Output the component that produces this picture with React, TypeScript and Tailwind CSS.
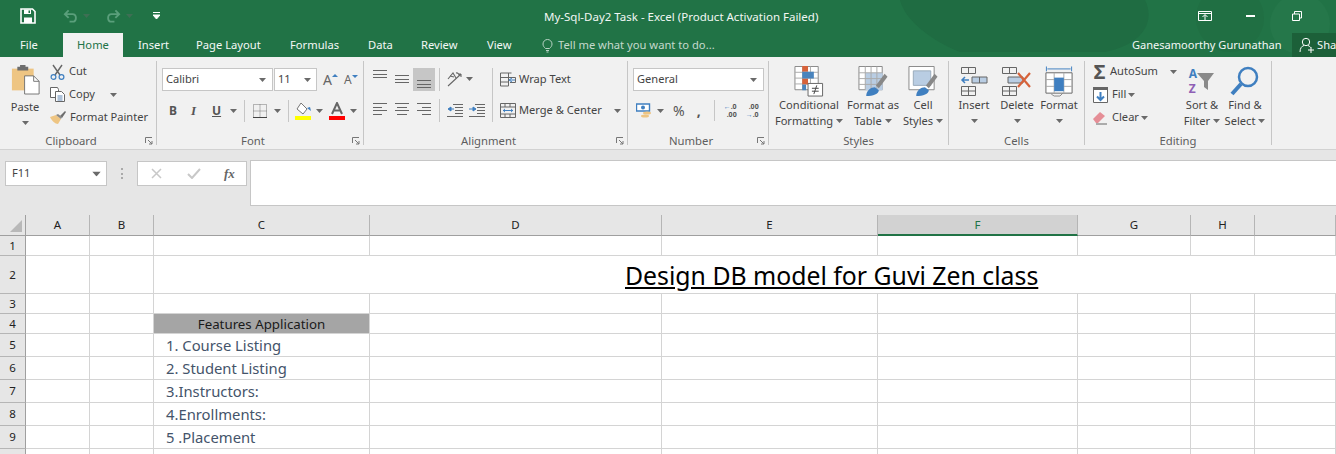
import type { ReactNode } from "react";

const FONT = "font-['Noto_Sans','Open_Sans',sans-serif]";

function Caret({ className = "" }: { className?: string }) {
  return (
    <svg width="7" height="4" viewBox="0 0 7 4" className={`shrink-0 ${className}`}>
      <path d="M0 0h7L3.5 4z" fill="#6a6a6a" />
    </svg>
  );
}

function Launcher() {
  return (
    <svg width="8" height="8" viewBox="0 0 8 8" className="absolute bottom-0 right-[3px]">
      <path d="M.5 6V.5H7M3 3l4 4M7 4v3H4" fill="none" stroke="#777" />
    </svg>
  );
}

function Sep({ className = "h-[22px] mx-[5px]" }: { className?: string }) {
  return <div className={`w-px shrink-0 bg-[#c6c6c6] ${className}`} />;
}

function Group({ label, width, launcher, children }: { label: string; width: string; launcher?: boolean; children: ReactNode }) {
  return (
    <div className={`relative flex h-[84px] shrink-0 flex-col border-r border-[#c6c6c6] ${width}`}>
      <div className="h-[73px] shrink-0">{children}</div>
      <div className={`h-[14px] shrink-0 text-center text-[11.3px] leading-[14px] text-[#5e5e5e] ${launcher ? "pr-[14px]" : ""}`}>{label}</div>
      {launcher && <Launcher />}
    </div>
  );
}

function Lines({ rows }: { rows: number[][] }) {
  return (
    <svg width="16" height={rows.length * 4} viewBox={`0 0 16 ${rows.length * 4}`} className="shrink-0">
      {rows.map(([x1, x2], i) => (
        <path key={i} d={`M${x1} ${Math.round(i * 3.6) + 0.5}H${x2}`} stroke="#666" />
      ))}
    </svg>
  );
}

function BigButton({ icon, lines, width, caretOnly }: { icon: ReactNode; lines: string[]; width: string; caretOnly?: boolean }) {
  return (
    <div className={`flex shrink-0 flex-col items-center ${width}`}>
      <div className="flex h-[31px] items-start justify-center">{icon}</div>
      <div className="whitespace-nowrap text-center text-[11.1px] leading-[16px] text-[#444]">{lines[0]}</div>
      {caretOnly ? (
        <div className="flex h-[16px] items-center"><Caret /></div>
      ) : (
        <div className="flex h-[16px] items-center gap-[3px] whitespace-nowrap text-[11.1px] text-[#444]">
          {lines[1]}
          <Caret />
        </div>
      )}
    </div>
  );
}

const columns = [
  { n: "A", w: "w-[64px]" },
  { n: "B", w: "w-[64px]" },
  { n: "C", w: "w-[216px]" },
  { n: "D", w: "w-[292px]" },
  { n: "E", w: "w-[216px]" },
  { n: "F", w: "w-[200px]" },
  { n: "G", w: "w-[113px]" },
  { n: "H", w: "w-[64px]" },
  { n: "", w: "w-[81px]" },
];

const rows = [
  { n: "1", h: "h-[20px]" },
  { n: "2", h: "h-[38px]" },
  { n: "3", h: "h-[20px]" },
  { n: "4", h: "h-[20px]" },
  { n: "5", h: "h-[23px]", text: "1. Course Listing" },
  { n: "6", h: "h-[23px]", text: "2. Student Listing" },
  { n: "7", h: "h-[23px]", text: "3.Instructors:" },
  { n: "8", h: "h-[23px]", text: "4.Enrollments:" },
  { n: "9", h: "h-[23px]", text: "5 .Placement" },
  { n: "", h: "h-[23px]" },
];

function TitleBar() {
  return (
    <div className="relative h-[57px] overflow-hidden bg-[#217346] text-white">
      <svg width="1336" height="57" className="absolute left-0 top-0">
        <path d="M900 0h245c10 20 0 44-40 52H960C930 40 905 20 900 0z" fill="#1f6c42" />
        <circle cx="1230" cy="18" r="34" fill="#20693f" opacity=".4" />
        <circle cx="1300" cy="24" r="30" fill="#25774a" />
      </svg>
      <div className="relative flex h-[32px] items-center">
        <svg width="16" height="16" viewBox="0 0 16 16" className="ml-[20px]">
          <path d="M1 1h11.5L15 3.5V15H1z" fill="none" stroke="#fff" strokeWidth="1.6" />
          <path d="M4 1.5h7v4.5H4zM4 9.5h8V15H4z" fill="#fff" />
          <path d="M8.5 2.5h1.5v2.5H8.5z" fill="#217346" />
        </svg>
        <svg width="15" height="14" viewBox="0 0 16 14" className="ml-[27px]">
          <path d="M6 1L2 5l4 4M2 5h8c5 0 5 8 0 8H7" fill="none" stroke="#5a9f7b" strokeWidth="2" />
        </svg>
        <Caret className="ml-[5px] opacity-40" />
        <svg width="15" height="14" viewBox="0 0 16 14" className="ml-[16px] -scale-x-100">
          <path d="M6 1L2 5l4 4M2 5h8c5 0 5 8 0 8H7" fill="none" stroke="#5a9f7b" strokeWidth="2" />
        </svg>
        <Caret className="ml-[5px] opacity-40" />
        <svg width="7" height="8" viewBox="0 0 7 8" className="ml-[20px]">
          <path d="M0 .5h7M0 3h7l-3.5 4z" stroke="#fff" fill="#fff" strokeWidth="1" />
        </svg>
        <div className="absolute left-[544px] top-[9px] whitespace-nowrap text-[11.5px] leading-[16px] text-[#f2f7f4]">
          My-Sql-Day2 Task - Excel (Product Activation Failed)
        </div>
        <div className="ml-auto flex items-center">
          <svg width="14" height="11" viewBox="0 0 14 11">
            <path d="M.5.5h13v9H.5zM.5 2.5h13M7 9V4M4.5 6L7 3.5 9.5 6" fill="none" stroke="#fff" />
          </svg>
          <div className="ml-[34px] h-[2px] w-[9px] bg-white" />
          <svg width="10" height="10" viewBox="0 0 10 10" className="ml-[37px] mr-[34px]">
            <path d="M.5 3h7v6.500h-7zM2.500 3V.500h7V7H7.500" fill="none" stroke="#fff" />
          </svg>
        </div>
      </div>
      <div className="relative flex h-[25px] items-center pt-[1px] text-[11.2px] text-[#f4f8f6]">
        <span className="ml-[20px] w-[43px]">File</span>
        <span className="flex h-[24px] w-[60px] items-center justify-center self-end bg-[#f1f1f1] text-[#217346]">Home</span>
        <span className="ml-[15px] w-[58px]">Insert</span>
        <span className="w-[94px]">Page Layout</span>
        <span className="w-[78px]">Formulas</span>
        <span className="w-[53px]">Data</span>
        <span className="w-[66px]">Review</span>
        <span className="w-[54px]">View</span>
        <svg width="13" height="15" viewBox="0 0 13 15">
          <path d="M4.500 10.500C3 9 2 8 2 6a4.500 4.500 0 019 0c0 2-1 3-2.500 4.500zM5 12.500h3M5.500 14h2" fill="none" stroke="#b9d3c5" />
        </svg>
        <span className="ml-[4px] whitespace-nowrap text-[#c5dacd]">Tell me what you want to do...</span>
        <span className="absolute left-[1132px] whitespace-nowrap text-[11.06px]">Ganesamoorthy Gurunathan</span>
        <div className="absolute left-[1292px] flex h-[24px] w-[44px] items-center gap-[3px] overflow-hidden bg-[#1c6039] pl-[7px]">
          <svg width="15" height="16" viewBox="0 0 15 16" className="shrink-0">
            <circle cx="7" cy="5" r="3.700" fill="none" stroke="#fff" />
            <path d="M1 15c0-4 2-6 4-6.500M9 8.500c1 .3 2 1 2.500 2M9 13h6M12 10v6" fill="none" stroke="#fff" />
          </svg>
          <span>Sha</span>
        </div>
      </div>
    </div>
  );
}

function Ribbon() {
  return (
    <div className="flex h-[93px] border-b border-[#d2d2d2] bg-[#f1f1f1] pt-[4px] text-[11.1px] text-[#444]">
      <Group label="Clipboard" launcher width="w-[157px]">
        <div className="flex">
          <div className="flex w-[50px] flex-col items-center">
            <svg width="29" height="31" viewBox="0 0 32 32" className="mt-[3px]">
              <path d="M1 4h24v24H1z" fill="#eec583" />
              <path d="M7 2h12v4H7zM10 0h6v3h-6z" fill="#6d6d6d" />
              <path d="M15 12h10l6 6v14H15z" fill="#fff" stroke="#6d6d6d" />
              <path d="M25 12v6h6" fill="none" stroke="#6d6d6d" />
            </svg>
            <div className="mt-[4px] leading-[16px]">Paste</div>
            <Caret className="mt-[6px]" />
          </div>
          <div className="-mt-[1px] flex flex-col">
            <div className="flex h-[23px] items-center gap-[4px]">
              <svg width="15" height="16" viewBox="0 0 15 16">
                <path d="M3 1l7 10M12 1L5 11" stroke="#666" strokeWidth="1.400" />
                <circle cx="3.500" cy="13" r="2.400" fill="none" stroke="#3f7fc0" strokeWidth="1.200" />
                <circle cx="11.500" cy="13" r="2.400" fill="none" stroke="#3f7fc0" strokeWidth="1.200" />
              </svg>
              Cut
            </div>
            <div className="flex h-[23px] items-center gap-[4px]">
              <svg width="15" height="15" viewBox="0 0 15 15">
                <path d="M.5.500h7l1 2v8H.5z" fill="#fff" stroke="#666" />
                <path d="M5.500 4.500h6l3 3v7h-9z" fill="#fff" stroke="#666" />
                <path d="M7.500 9h5M7.500 11h5M7.500 13h5" stroke="#5e86b5" />
              </svg>
              Copy
              <Caret className="ml-[11px]" />
            </div>
            <div className="flex h-[23px] items-center gap-[4px] whitespace-nowrap">
              <svg width="16" height="13" viewBox="0 0 16 13">
                <path d="M0 6l6-2 5 4-3 5c-3 0-6-3-8-7z" fill="#eec583" />
                <path d="M10 5l5-5 1 1-4 6z" fill="#6d6d6d" />
                <path d="M6 4l5 4 1-2-4-3z" fill="#888" />
              </svg>
              Format Painter
            </div>
          </div>
        </div>
      </Group>

      <Group label="Font" launcher width="w-[207px]">
        <div className="ml-[5px] flex items-center pt-[7px]">
          <div className="flex h-[23px] w-[111px] items-center justify-between border border-[#c6c6c6] bg-white pl-[3px] pr-[6px]">
            Calibri
            <Caret />
          </div>
          <div className="ml-px flex h-[23px] w-[43px] items-center justify-between border border-[#c6c6c6] bg-white pl-[3px] pr-[5px]">
            11
            <Caret />
          </div>
          <div className="ml-[6px] flex items-end text-[14px] leading-[16px] text-[#666]">
            A
            <span className="mb-[11px] h-0 w-0 border-x-[3px] border-b-[3px] border-x-transparent border-b-[#3f7fc0]" />
          </div>
          <div className="ml-[6px] flex items-end text-[12px] leading-[16px] text-[#666]">
            A
            <span className="mb-[10px] h-0 w-0 border-x-[3px] border-t-[3px] border-x-transparent border-t-[#3f7fc0]" />
          </div>
        </div>
        <div className="ml-[12px] mt-[9px] flex h-[22px] items-center text-[12px] text-[#555]">
          <span className="w-[22px] font-bold">B</span>
          <span className="w-[21px] font-['Liberation_Serif',serif] text-[13px] font-bold italic">I</span>
          <span className="w-[16px] font-bold underline">U</span>
          <Caret className="ml-[2px]" />
          <Sep className="ml-[7px] mr-[8px] h-[22px]" />
          <svg width="14" height="14" viewBox="0 0 14 14">
            <path d="M.5.500h13v13H.5zM7 .500v13M.5 7h13" fill="none" stroke="#777" strokeDasharray="1 1" />
            <path d="M0 13.500h14" stroke="#444" />
          </svg>
          <Caret className="ml-[7px]" />
          <Sep className="ml-[7px] mr-[6px] h-[22px]" />
          <svg width="17" height="18" viewBox="0 0 17 18">
            <path d="M6 1l6 6-4 5-6-5z" fill="#fff" stroke="#777" />
            <path d="M12 6l3-1 1 4z" fill="#3f7fc0" />
            <path d="M0 14h16v4H0z" fill="#ff0" />
          </svg>
          <Caret className="ml-[4px]" />
          <svg width="16" height="18" viewBox="0 0 16 18" className="ml-[6px]">
            <path d="M3 12L8 1l5 11M5 8.500h6" fill="none" stroke="#666" strokeWidth="2" />
            <path d="M0 14h16v4H0z" fill="#f00" />
          </svg>
          <Caret className="ml-[5px]" />
        </div>
      </Group>

      <Group label="Alignment" launcher width="w-[264px]">
        <div className="flex">
          <div className="flex flex-col">
            <div className="ml-[8px] mt-[7px] flex h-[23px] items-start">
              <div className="w-[22px] pt-[2px]"><Lines rows={[[1, 15], [1, 15], [1, 15]]} /></div>
              <div className="w-[19px] pt-[7px]"><Lines rows={[[1, 15], [1, 15], [1, 15]]} /></div>
              <div className="flex h-[23px] w-[22px] justify-center bg-[#c6c6c6] pt-[12px]"><Lines rows={[[1, 15], [1, 15], [1, 15]]} /></div>
              <Sep className="ml-[4px] mr-[7px] h-[23px]" />
              <svg width="16" height="16" viewBox="0 0 16 16" className="mt-[3px]">
                <path d="M1 15L14 3M1 8l5-6 3 5M3 5l4 1M9 2a2.500 2.500 0 013 3M14 3l-3 0M14 3v3" fill="none" stroke="#666" strokeWidth="1.100" />
              </svg>
              <Caret className="ml-[3px] mt-[9px]" />
            </div>
            <div className="ml-[8px] mt-[8px] flex h-[23px] items-center">
              <div className="flex w-[22px]"><Lines rows={[[1, 15], [1, 10], [1, 15], [1, 10]]} /></div>
              <div className="flex w-[22px]"><Lines rows={[[1, 15], [3, 13], [1, 15], [3, 13]]} /></div>
              <div className="flex w-[22px]"><Lines rows={[[1, 15], [6, 15], [1, 15], [6, 15]]} /></div>
              <Sep className="ml-[1px] mr-[7px] h-[23px]" />
              <svg width="16" height="13" viewBox="0 0 16 13">
                <path d="M6 .500h10M8 3.500h8M8 6.500h8M8 9.500h8M0 12.500h16" stroke="#666" />
                <path d="M7 5H2M4 3L1 5l3 2z" fill="#3f7fc0" stroke="#3f7fc0" />
              </svg>
              <svg width="16" height="13" viewBox="0 0 16 13" className="ml-[6px]">
                <path d="M6 .500h10M8 3.500h8M8 6.500h8M8 9.500h8M0 12.500h16" stroke="#666" />
                <path d="M0 5h5M4 3l3 2-3 2z" fill="#3f7fc0" stroke="#3f7fc0" />
              </svg>
            </div>
          </div>
          <Sep className="ml-[7px] mr-[7px] mt-[7px] h-[54px]" />
          <div className="flex flex-col">
            <div className="mt-[7px] flex h-[23px] items-center gap-[3px]">
              <svg width="16" height="15" viewBox="0 0 16 15">
                <path d="M.5 1h11M.5 1v13h8V1M.5 5.500h15v5H10M.5 10h8" fill="none" stroke="#666" />
                <path d="M15 8h-5M12 6l-3 2 3 2" fill="none" stroke="#3f7fc0" />
              </svg>
              Wrap Text
            </div>
            <div className="mt-[8px] flex h-[23px] items-center gap-[3px] whitespace-nowrap">
              <svg width="16" height="15" viewBox="0 0 16 15">
                <path d="M.5.500h15v14H.5zM.5 4h15M.5 11h15M5 .500V4M10 .500V4M5 11v3.500M10 11v3.500" fill="none" stroke="#666" />
                <path d="M3 7.500h10" stroke="#3f7fc0" />
                <path d="M3 7.500l2-2v4zM13 7.500l-2-2v4z" fill="#3f7fc0" />
              </svg>
              Merge &amp; Center
              <Caret className="ml-[9px]" />
            </div>
          </div>
        </div>
      </Group>

      <Group label="Number" launcher width="w-[141px]">
        <div className="ml-[5px] mt-[7px] flex h-[23px] w-[131px] items-center justify-between border border-[#c6c6c6] bg-white pl-[3px] pr-[6px]">
          General
          <Caret />
        </div>
        <div className="ml-[8px] mt-[8px] flex h-[23px] items-center">
          <svg width="16" height="16" viewBox="0 0 16 16">
            <path d="M.5 1h13v7H.5z" fill="#fff" stroke="#3f7fc0" strokeWidth="1.400" />
            <circle cx="7" cy="4.500" r="2" fill="#3f7fc0" />
            <ellipse cx="11" cy="10" rx="4" ry="1.500" fill="#eec583" />
            <ellipse cx="9" cy="13" rx="4" ry="1.500" fill="#eec583" />
          </svg>
          <Caret className="ml-[5px]" />
          <span className="ml-[9px] text-[14px] text-[#555]">%</span>
          <span className="ml-[12px] text-[14px] font-bold text-[#555]">,</span>
          <Sep className="ml-[13px] mr-[6px] h-[21px]" />
          <div className="flex w-[16px] flex-col items-end gap-[1px] text-[7px] font-bold leading-[7px] text-[#555]">
            <span className="text-[#3f7fc0]">←<span className="text-[#555]">.0</span></span>
            <span>.00</span>
          </div>
          <div className="ml-[6px] flex w-[16px] flex-col items-end gap-[1px] text-[7px] font-bold leading-[7px] text-[#555]">
            <span>.00</span>
            <span className="text-[#3f7fc0]">→<span className="text-[#555]">.0</span></span>
          </div>
        </div>
      </Group>

      <Group label="Styles" width="w-[180px]">
        <div className="flex pl-[4px] pt-[5px]">
          <BigButton
            width="w-[72px]"
            lines={["Conditional", "Formatting"]}
            icon={
              <svg width="30" height="31" viewBox="0 0 30 32">
                <path d="M.5.500h24v24H.5z" fill="#fff" stroke="#888" />
                <path d="M8.500.500v24M16.500.500v24M.5 6.500h24M.5 12.500h24M.5 18.500h24" stroke="#aaa" />
                <path d="M8 0h6v6H8zM8 13h6v6H8z" fill="#d6623a" />
                <path d="M8 6h12v7H8zM8 19h4v6H8z" fill="#4a84bd" />
                <path d="M14 18h15v13H14z" fill="#fff" stroke="#666" />
                <path d="M18 23h7M18 26h7M23 20l-3 9" stroke="#444" />
              </svg>
            }
          />
          <BigButton
            width="w-[56px]"
            lines={["Format as", "Table"]}
            icon={
              <svg width="30" height="31" viewBox="0 0 30 32">
                <path d="M.5.500h24v24H.5z" fill="#fff" stroke="#888" />
                <path d="M7 7h18v18H7z" fill="#b9cde3" />
                <path d="M.5 7h24M.5 13h24M.5 19h24M7 .500v24M13 .500v24M19 .500v24" stroke="#aaa" />
                <path d="M18 20L27 8l3 3-9 12z" fill="#888" />
                <path d="M8 31c0-6 5-9 9-9l4 3c0 4-6 6-13 6z" fill="#3f7fc0" />
              </svg>
            }
          />
          <BigButton
            width="w-[44px]"
            lines={["Cell", "Styles"]}
            icon={
              <svg width="30" height="31" viewBox="0 0 30 32">
                <path d="M.5.500h26v24H.5z" fill="#fff" stroke="#888" />
                <path d="M5 5h18v15H5z" fill="#b9cde3" stroke="#9ab" />
                <path d="M18 20L27 8l3 3-9 12z" fill="#888" />
                <path d="M8 31c0-6 5-9 9-9l4 3c0 4-6 6-13 6z" fill="#3f7fc0" />
              </svg>
            }
          />
        </div>
      </Group>

      <Group label="Cells" width="w-[136px]">
        <div className="flex pl-[4px] pt-[5px]">
          <BigButton
            width="w-[42px]"
            caretOnly
            lines={["Insert"]}
            icon={
              <svg width="28" height="30" viewBox="0 0 28 30">
                <path d="M1.500 1.500h14v6h-14zM8.500 1.500v6M1.500 20.500h14v9h-14zM1.500 25h14M8.500 20.500v9" fill="none" stroke="#666" />
                <path d="M12 11h15v6H12zM19.500 11v6" fill="#b9cde3" stroke="#666" />
                <path d="M9 14H2M5 11l-3 3 3 3" fill="none" stroke="#3f7fc0" strokeWidth="1.500" />
              </svg>
            }
          />
          <BigButton
            width="w-[44px]"
            caretOnly
            lines={["Delete"]}
            icon={
              <svg width="30" height="30" viewBox="0 0 30 30">
                <path d="M.5 1.500h14v6H.5zM7.500 1.500v6M.5 20.500h14v9H.5zM.5 25h14M7.500 20.500v9" fill="none" stroke="#666" />
                <path d="M6 11h15v6H6z" fill="#b9cde3" stroke="#666" />
                <path d="M16 7l12 14M28 7L16 21" stroke="#d6623a" strokeWidth="2.200" />
              </svg>
            }
          />
          <BigButton
            width="w-[40px]"
            caretOnly
            lines={["Format"]}
            icon={
              <svg width="28" height="31" viewBox="0 0 28 32">
                <path d="M1 .500v5M27 .500v5M2 3h24" stroke="#3f7fc0" />
                <path d="M.5 7h27v21H.5z" fill="#fff" stroke="#666" />
                <path d="M9 7v21M19 7v21M.5 14h27M.5 21h27" stroke="#aaa" />
                <path d="M9 12h10v14H9z" fill="#3f7fc0" />
                <path d="M6 29l3 2h6l3-3" fill="none" stroke="#888" />
              </svg>
            }
          />
        </div>
      </Group>

      <Group label="Editing" width="w-[187px]">
        <div className="flex pl-[8px]">
          <div className="-mt-[1px] flex w-[84px] flex-col">
            <div className="flex h-[23px] items-center gap-[4px]">
              <span className="w-[15px] text-center text-[20px] font-bold leading-[18px] text-[#555]">Σ</span>
              AutoSum
              <Caret className="ml-[8px]" />
            </div>
            <div className="flex h-[23px] items-center gap-[4px]">
              <svg width="15" height="16" viewBox="0 0 15 16">
                <path d="M.5.500h14v15H.5z" fill="#fff" stroke="#666" />
                <path d="M0 0h15v3H0z" fill="#666" />
                <path d="M7.500 5v8M4 9.500l3.500 3.500L11 9.500" fill="none" stroke="#3f7fc0" strokeWidth="2" />
              </svg>
              Fill
              <Caret className="-ml-[2px]" />
            </div>
            <div className="flex h-[23px] items-center gap-[4px]">
              <svg width="15" height="14" viewBox="0 0 15 14">
                <path d="M0 8l7-7 5 4-7 7H3z" fill="#e58e96" />
                <path d="M3 13h11" stroke="#666" />
              </svg>
              Clear
              <Caret className="-ml-[2px]" />
            </div>
          </div>
          <div className="pt-[5px]">
            <BigButton
              width="w-[50px]"
              lines={["Sort &", "Filter"]}
              icon={
                <div className="flex items-center">
                  <div className="flex flex-col text-[12px] font-bold leading-[15px]">
                    <span className="text-[#3f7fc0]">A</span>
                    <span className="text-[#8f5fb5]">Z</span>
                  </div>
                  <svg width="18" height="20" viewBox="0 0 18 20">
                    <path d="M0 2h17L11 10v9l-4-3v-6z" fill="#8a8a8a" />
                  </svg>
                </div>
              }
            />
          </div>
          <div className="pt-[5px]">
            <BigButton
              width="w-[36px]"
              lines={["Find &", "Select"]}
              icon={
                <svg width="30" height="30" viewBox="0 0 30 30">
                  <circle cx="18" cy="11" r="9" fill="none" stroke="#3f7fc0" strokeWidth="2.500" />
                  <path d="M11 18L2 28" stroke="#3f7fc0" strokeWidth="4" />
                </svg>
              }
            />
          </div>
        </div>
      </Group>
    </div>
  );
}

function FormulaBar() {
  return (
    <div className="flex h-[65px] bg-[#e6e6e6] pt-[10px] text-[11.1px]">
      <div className="ml-[5px] mt-px flex h-[25px] w-[102px] items-center justify-between border border-[#c6c6c6] bg-white pl-[6px] pr-[6px] text-[#444]">
        F11
        <Caret className="scale-125" />
      </div>
      <div className="ml-[14px] mt-[8px] flex h-[11px] flex-col justify-between">
        <span className="h-[2px] w-[2px] bg-[#aaa]" />
        <span className="h-[2px] w-[2px] bg-[#aaa]" />
        <span className="h-[2px] w-[2px] bg-[#aaa]" />
      </div>
      <div className="ml-[14px] mt-px flex h-[25px] w-[110px] items-center border border-[#c6c6c6] bg-white pl-[13px]">
        <svg width="11" height="11" viewBox="0 0 11 11">
          <path d="M1 1l9 9M10 1l-9 9" stroke="#c8c8c8" strokeWidth="1.500" />
        </svg>
        <svg width="14" height="11" viewBox="0 0 14 11" className="ml-[25px]">
          <path d="M1 6l4 4 8-9" fill="none" stroke="#c8c8c8" strokeWidth="2" />
        </svg>
        <span className="ml-[23px] font-['Liberation_Serif',serif] text-[13px] font-bold italic leading-none text-[#666]">fx</span>
      </div>
      <div className="ml-[3px] h-[46px] flex-1 border border-r-0 border-[#c6c6c6] bg-white" />
    </div>
  );
}

function Sheet() {
  return (
    <div className="text-[11.5px]">
      <div className="flex h-[21px] bg-[#e6e6e6]">
        <div className="flex h-[21px] w-[26px] shrink-0 items-end justify-end border-b border-r border-[#9f9f9f] pb-[3px] pr-[3px]">
          <svg width="12" height="12" viewBox="0 0 12 12"><path d="M12 0v12H0z" fill="#b8b8b8" /></svg>
        </div>
        {columns.map((c) =>
          c.n === "F" ? (
            <div key={c.n} className={`flex shrink-0 items-center justify-center border-b-2 border-r border-b-[#217346] border-r-[#b5b5b5] bg-[#d2d2d2] text-[#217346] ${c.w}`}>
              {c.n}
            </div>
          ) : (
            <div key={c.w + c.n} className={`flex shrink-0 items-center justify-center border-b border-r border-b-[#9f9f9f] border-r-[#b5b5b5] text-[#222] ${c.w}`}>
              {c.n}
            </div>
          ),
        )}
      </div>
      {rows.map((r) => (
        <div key={r.h + r.n} className={`flex bg-white ${r.h}`}>
          <div className="flex w-[26px] shrink-0 items-center justify-center border-b border-r border-b-[#b5b5b5] border-r-[#9f9f9f] bg-[#e6e6e6] text-[#222]">
            {r.n}
          </div>
          {r.n === "2" ? (
            <>
              <div className="w-[64px] shrink-0 border-b border-r border-[#d4d4d4]" />
              <div className="w-[64px] shrink-0 border-b border-r border-[#d4d4d4]" />
              <div className="flex-1 whitespace-nowrap border-b border-[#d4d4d4] pl-[471px] pt-[2px] text-[24.8px] leading-[34px] text-black underline">
                Design DB model for Guvi Zen class
              </div>
            </>
          ) : (
            columns.map((c) => (
              <div
                key={c.w + c.n}
                className={`shrink-0 whitespace-nowrap border-b border-r border-[#d4d4d4] ${c.w} ${
                  c.n === "C" && r.n === "4" ? "bg-[#a5a5a5] text-center text-[13.3px] leading-[20px] text-[#1a1a1a]" : ""
                } ${c.n === "C" && r.text ? "pl-[12px] text-[14.8px] leading-[23px] text-[#44546a]" : ""}`}
              >
                {c.n === "C" && r.n === "4" ? "Features Application" : c.n === "C" ? r.text : ""}
              </div>
            ))
          )}
        </div>
      ))}
    </div>
  );
}

export default function App() {
  return (
    <div className={`h-[454px] w-[1336px] overflow-hidden bg-white ${FONT}`}>
      <TitleBar />
      <Ribbon />
      <FormulaBar />
      <Sheet />
    </div>
  );
}
